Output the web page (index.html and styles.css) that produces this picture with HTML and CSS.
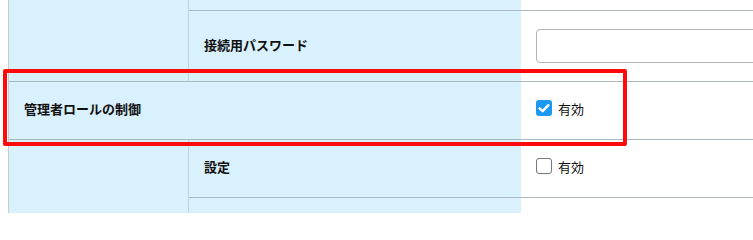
FILE: index.html
```html
<!DOCTYPE html>
<html lang="ja">
<head>
<meta charset="utf-8">
<link rel="stylesheet" href="styles.css">
</head>
<body>
<div class="page">
  <div class="grid">
    <div class="group group-top"></div>
    <div class="label cut"></div>
    <div class="value cut"></div>

    <div class="label">接続用パスワード</div>
    <div class="value"><input class="text-input" type="password"></div>

    <div class="label wide">管理者ロールの制御</div>
    <div class="value">
      <label class="check"><span class="box checked"><svg viewBox="0 0 16 16" width="16" height="16"><path d="M3.6 8.3 L6.6 11.2 L12.4 5.2" fill="none" stroke="#fff" stroke-width="2.4" stroke-linecap="round" stroke-linejoin="round"/></svg></span><span>有効</span></label>
    </div>

    <div class="group group-bottom"></div>
    <div class="label">設定</div>
    <div class="value">
      <label class="check"><span class="box"></span><span>有効</span></label>
    </div>

    <div class="label tail"></div>
    <div class="value tail"></div>
  </div>
  <div class="highlight"></div>
</div>
</body>
</html>
```
FILE: styles.css
```css
* { box-sizing: border-box; }
html, body { margin: 0; padding: 0; background: #fff; }
body {
  font-family: "Noto Sans CJK JP", "Noto Sans", sans-serif;
  font-size: 13px;
  color: #111;
  overflow: hidden;
}
.page {
  position: relative;
  width: 753px;
  height: 213px;
  overflow: hidden;
}
.grid {
  margin-left: 8px;
  border-left: 1px solid #c9c9c9;
  display: grid;
  grid-template-columns: 180px 332px 1fr;
  grid-template-rows: 11px 71px 58px 58px 40px;
}
.group {
  background: #d9f0fd;
  border-right: 1px solid #bfd3de;
}
.group-top {
  grid-column: 1;
  grid-row: 1 / 3;
  border-bottom: 1px solid #a9b8c1;
}
.group-bottom {
  grid-column: 1;
  grid-row: 4 / 6;
}
.label {
  background: #d9f0fd;
  border-bottom: 1px solid #a9b8c1;
  font-weight: bold;
  display: flex;
  align-items: center;
  padding-left: 15px;
  padding-bottom: 4px;
}
.label.wide {
  grid-column: 1 / 3;
}
.value {
  background: #fff;
  border-bottom: 1px solid #a9b8c1;
  display: flex;
  align-items: center;
  padding-left: 15px;
}
.tail { border-bottom: none; }
.text-input {
  width: 260px;
  height: 34px;
  border: 1px solid #b3b3b3;
  border-radius: 4px;
  background: #fff;
  margin: 0;
  margin-top: -1px;
}
.check {
  display: flex;
  align-items: center;
  gap: 6px;
  font-weight: normal;
  margin-top: -5px;
}
.box {
  width: 16px;
  height: 16px;
  border: 1.5px solid #767676;
  border-radius: 3px;
  background: #fff;
  display: block;
}
.box.checked {
  border: none;
  background: #1a98f2;
}
.box svg { display: block; }
.highlight {
  position: absolute;
  left: 3px;
  top: 69px;
  width: 624px;
  height: 77px;
  border: 4px solid #ff0a0a;
  border-radius: 2px;
}
```
